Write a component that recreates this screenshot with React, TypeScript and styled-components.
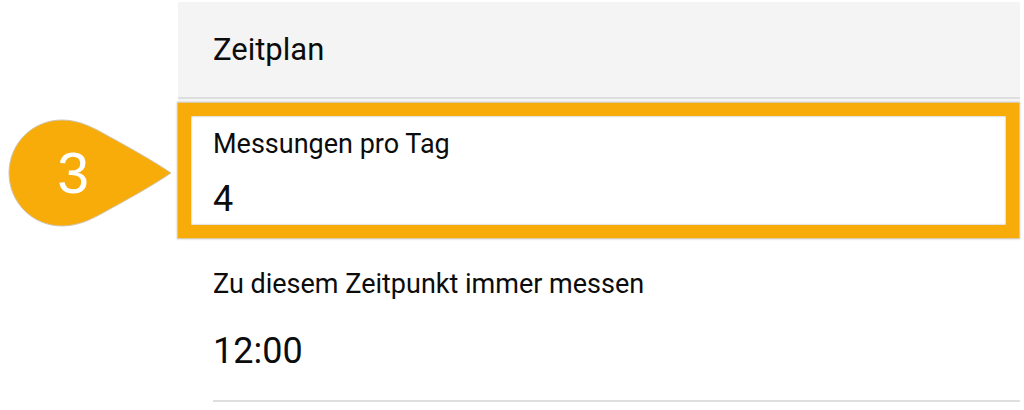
import React from "react";
import styled, { createGlobalStyle } from "styled-components";

const GlobalStyle = createGlobalStyle`
  *, *::before, *::after { box-sizing: border-box; }
  body {
    margin: 0;
    background: #fff;
    color: #0c0c0c;
    font-family: Roboto, "Liberation Sans", sans-serif;
  }
`;

const Page = styled.main`
  display: grid;
  grid-template-columns: 177px minmax(0, 1fr);
  padding: 2px 4px 0 0;
`;

const SectionHeader = styled.header`
  grid-column: 2;
  margin-left: 1px;
  padding: 28px 35px 27px;
  background: #f4f4f4;
  border-bottom: 2px solid #dcdfdd;
  box-shadow: 0 4px 0 #f6f6f6;
`;

const Title = styled.h1`
  margin: 0;
  font-size: 31px;
  font-weight: 400;
  line-height: 40px;
`;

const Callout = styled.div`
  grid-column: 1;
  display: grid;
  align-items: center;
  padding: 7px 5px 0 8px;
`;

const Drop = styled.svg`
  grid-area: 1 / 1;
  display: block;
  width: 164px;
  height: 108px;
`;

const Step = styled.span`
  grid-area: 1 / 1;
  width: 130px;
  color: #fff;
  font-family: "Liberation Sans", sans-serif;
  font-size: 57px;
  line-height: 64px;
  text-align: center;
`;

const Highlight = styled.div`
  grid-column: 2;
  margin-top: 3px;
  padding: 10px 22px 4px;
  border: 14px solid #f8ac0a;
  outline: 1px solid #dccba4;
  outline-offset: -1px;
  box-shadow: inset 0 0 2px #9a9a9a, 0 0 2px #c5c5c5;
`;

const Field = styled.div<{ $gap: number }>`
  display: flex;
  flex-direction: column;
  gap: ${(p) => p.$gap}px;
`;

const PlainRow = styled.div`
  grid-column: 2;
  margin-left: 36px;
  padding: 27px 0;
  border-bottom: 2px solid #dfdfdf;
`;

const Label = styled.label`
  font-size: 27px;
  line-height: 36px;
`;

const Value = styled.input`
  width: 100%;
  height: 44px;
  padding: 0;
  border: 0;
  outline: 0;
  background: transparent;
  color: inherit;
  font-family: inherit;
  font-size: 36px;
  line-height: 44px;
`;

export default function App() {
  return (
    <>
      <GlobalStyle />
      <Page>
        <SectionHeader>
          <Title>Zeitplan</Title>
        </SectionHeader>
        <Callout>
          <Drop viewBox="0 0 164 108" aria-hidden="true">
            <path
              d="M163 54 C147 43 124 30 102 18 C86 9 72 1 54 1 C24 1 1 25 1 54 C1 83 24 107 54 107 C72 107 86 99 102 90 C124 78 147 65 163 54 Z"
              fill="#f8ac0a"
              stroke="#cfc6b4"
              strokeWidth="1"
            />
          </Drop>
          <Step>3</Step>
        </Callout>
        <Highlight>
          <Field $gap={15}>
            <Label htmlFor="per-day">Messungen pro Tag</Label>
            <Value id="per-day" defaultValue="4" />
          </Field>
        </Highlight>
        <PlainRow>
          <Field $gap={27}>
            <Label htmlFor="fixed-time">Zu diesem Zeitpunkt immer messen</Label>
            <Value id="fixed-time" defaultValue="12:00" />
          </Field>
        </PlainRow>
      </Page>
    </>
  );
}
